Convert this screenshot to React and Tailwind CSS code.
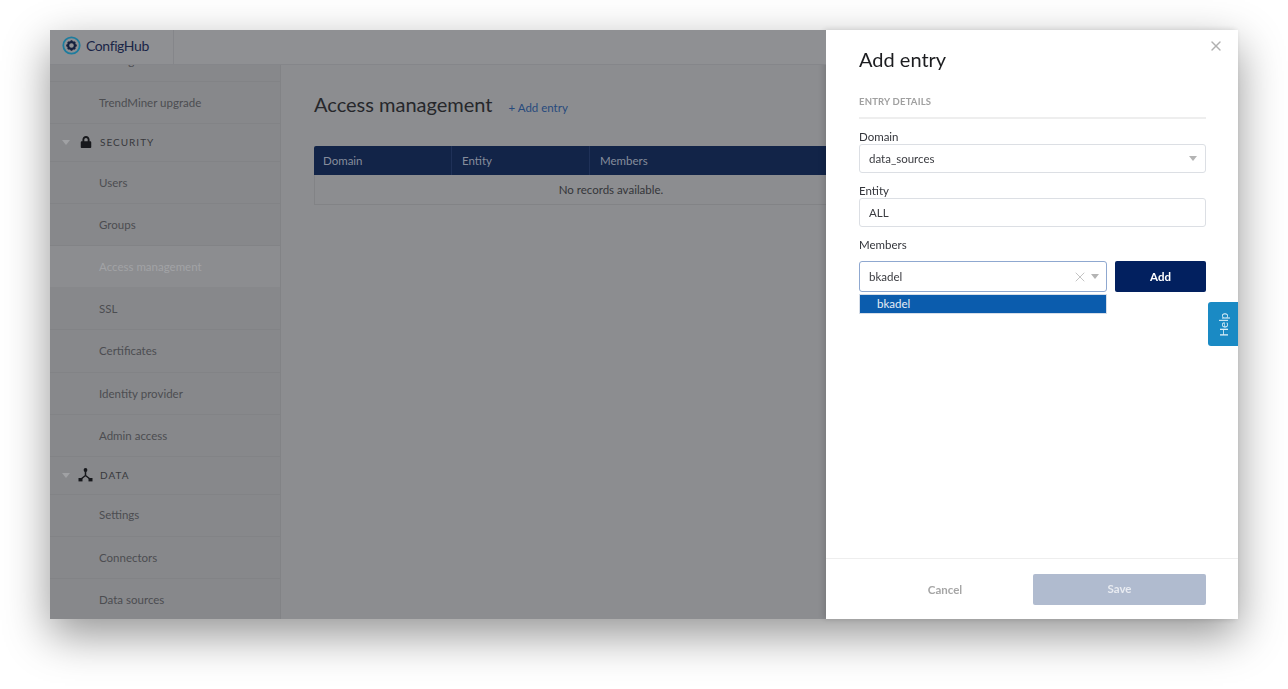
import React from 'react';
import { X } from 'lucide-react';
import { FaLock } from 'react-icons/fa';

const Caret = ({ className }) => (
  <svg width="8" height="5" viewBox="0 0 8 5" className={className}>
    <path d="M0 0h8L4 5z" fill="currentColor" />
  </svg>
);

const Logo = () => (
  <svg width="19" height="19" viewBox="0 0 19 19">
    <circle cx="9.5" cy="9.5" r="8.2" fill="none" stroke="#1d7c9e" strokeWidth="1.8" />
    <circle cx="9.5" cy="9.5" r="3.4" fill="none" stroke="#16213f" strokeWidth="2.2" />
    <g stroke="#16213f" strokeWidth="1.8">
      <path d="M9.5 4.2v2M9.5 12.8v2M4.2 9.5h2M12.8 9.5h2M5.8 5.8l1.4 1.4M11.8 11.8l1.4 1.4M13.2 5.8l-1.4 1.4M7.2 11.8l-1.4 1.4" />
    </g>
  </svg>
);

const DataIcon = () => (
  <svg width="15" height="14" viewBox="0 0 15 14" className="text-[#17181c]">
    <circle cx="7.5" cy="2" r="1.9" fill="currentColor" />
    <rect x="0.5" y="10" width="4" height="3.4" fill="currentColor" />
    <rect x="10.5" y="10" width="4" height="3.4" fill="currentColor" />
    <path d="M7.5 3v4.5M7.5 7.5L3 11M7.5 7.5L12 11" stroke="currentColor" strokeWidth="1.5" fill="none" />
  </svg>
);

const NavItem = ({ label, active }) => (
  <div
    className={`h-[42.2px] flex items-center pl-[49px] text-[11.5px] border-b ${
      active
        ? 'bg-[#8c8d90] text-[#a2a3a6] border-[#87888b] mr-[-1px]'
        : 'text-[#4c4d51] border-[#828386]'
    }`}
  >
    {label}
  </div>
);

const NavGroup = ({ label, icon }) => (
  <div className="h-[37.5px] flex items-center border-b border-[#828386]">
    <Caret className="ml-[12px] text-[#a0a1a4]" />
    <div className="w-[15px] ml-[8px] flex justify-center">{icon}</div>
    <span className="ml-[7px] text-[10px] tracking-[1px] text-[#38393d]">{label}</span>
  </div>
);

const Field = ({ label, children }) => (
  <div>
    <div className="text-[11.5px] leading-[14px] text-[#33353b]">{label}</div>
    {children}
  </div>
);

export default function App() {
  const adminItems = ['Users', 'Groups', 'Access management', 'SSL', 'Certificates', 'Identity provider', 'Admin access'];
  const dataItems = ['Settings', 'Connectors', 'Data sources'];

  return (
    <div className="w-[1288px] h-[689px] bg-white pt-[30px] pl-[50px] overflow-hidden font-['Lato','Liberation_Sans',sans-serif]">
      <div className="relative w-[1188px] h-[589px] flex blur-[0.5px] shadow-[0_16px_42px_rgba(0,0,0,0.42)]">
        {/* dimmed app behind the drawer */}
        <div className="w-[776px] h-full flex flex-col overflow-hidden bg-[#8c8d90]">
          <div className="h-[35px] shrink-0 flex bg-[#8f9093] border-b border-[#85868a] relative z-10">
            <div className="w-[124px] flex items-center pl-[12px] pb-[4px] border-r border-[#85868a]">
              <Logo />
              <span className="ml-[5px] text-[14px] tracking-[-0.4px] text-[#1a2547]">ConfigHub</span>
            </div>
          </div>
          <div className="flex flex-1 min-h-0">
            <div className="w-[231px] shrink-0 overflow-hidden bg-[#87888b] border-r border-[#828386]">
              <div className="mt-[-25.2px]">
                <NavItem label="Settings" />
                <NavItem label="TrendMiner upgrade" />
                <NavGroup label="SECURITY" icon={<FaLock size={12} className="text-[#17181c]" />} />
                {adminItems.map((item) => (
                  <NavItem key={item} label={item} active={item === 'Access management'} />
                ))}
                <NavGroup label="DATA" icon={<DataIcon />} />
                {dataItems.map((item) => (
                  <NavItem key={item} label={item} />
                ))}
              </div>
            </div>
            <div className="flex-1 pt-[27px] pl-[33px] overflow-hidden">
              <div className="flex items-baseline">
                <h1 className="text-[20px] leading-[24px] text-[#26272b]">Access management</h1>
                <span className="ml-[16px] text-[11.5px] text-[#274a7d]">+ Add entry</span>
              </div>
              <div className="w-[594px] mt-[30px]">
                <div className="h-[29px] flex items-center bg-[#122448] rounded-t-[2px] text-[11.5px] text-[#868d9c]">
                  <div className="w-[138px] h-full flex items-center pl-[9px] border-r border-[#1f3158]">Domain</div>
                  <div className="w-[138px] h-full flex items-center pl-[10px] border-r border-[#1f3158]">Entity</div>
                  <div className="flex-1 pl-[10px]">Members</div>
                </div>
                <div className="h-[30px] flex items-center justify-center border-x border-b border-[#828386] text-[11.5px] text-[#35363a]">
                  No records available.
                </div>
              </div>
            </div>
          </div>
        </div>

        {/* drawer */}
        <div className="relative w-[412px] h-full flex flex-col bg-white shadow-[-2px_0_6px_rgba(0,0,0,0.15)]">
          <X size={16} strokeWidth={2} className="absolute top-[8px] right-[14px] text-[#b0b0b0]" />
          <div className="flex-1 pt-[17px] pl-[33px] pr-[32px]">
            <h2 className="text-[20px] leading-[24px] text-[#1c1d20]">Add entry</h2>
            <div className="mt-[25px] pb-[9px] border-b-2 border-[#eeeeee] text-[9.5px] leading-[12px] font-bold tracking-[0.2px] text-[#a0a0a0]">
              ENTRY DETAILS
            </div>
            <div className="mt-[11px]">
              <Field label="Domain">
                <div className="h-[29px] flex items-center justify-between px-[9px] border border-[#dcdfe4] rounded-[3px] text-[11.5px] text-[#3a3b40]">
                  <span>data_sources</span>
                  <Caret className="text-[#b4b4b4] mr-[-1px]" />
                </div>
              </Field>
            </div>
            <div className="mt-[11px]">
              <Field label="Entity">
                <div className="h-[29px] flex items-center px-[9px] border border-[#dcdfe4] rounded-[3px] text-[11.5px] text-[#3a3b40]">
                  ALL
                </div>
              </Field>
            </div>
            <div className="mt-[11px]">
              <Field label="Members">
                <div className="mt-[9px] flex gap-[8px]">
                  <div className="relative w-[248px] h-[31px] flex items-center px-[9px] border border-[#8fa8d0] rounded-[3px] text-[11.5px] text-[#3a3b40]">
                    <span>bkadel</span>
                    <X size={16} strokeWidth={1.5} className="ml-auto text-[#c4c4c4]" />
                    <Caret className="ml-[3px] mr-[-2px] text-[#b4b4b4]" />
                    <div className="absolute left-[-1px] top-[32px] w-[248px] h-[20px] flex items-center pl-[17px] bg-[#0b5cad] border border-[#d5dde8] text-[11.5px] text-[#e6edf6]">
                      bkadel
                    </div>
                  </div>
                  <button className="w-[91px] h-[31px] rounded-[2px] bg-[#02205f] text-[11.5px] font-bold text-white">Add</button>
                </div>
              </Field>
            </div>
          </div>
          <div className="h-[61px] shrink-0 flex items-center border-t border-[#eeeeee] pr-[32px]">
            <span className="w-[207px] pl-[31px] pt-[1px] text-center text-[11.5px] font-bold text-[#a6a6a6]">Cancel</span>
            <button className="w-[173px] h-[31px] rounded-[2px] bg-[#b0bbcf] text-[11.5px] font-bold text-[#e8ebf1]">Save</button>
          </div>
          <div className="absolute top-[272px] right-0 w-[30px] h-[44px] flex items-center justify-center rounded-l-[3px] bg-[#1a8ac4]">
            <span className="-rotate-90 ml-[1px] mt-[1px] text-[11.5px] text-[#d8edf7]">Help</span>
          </div>
        </div>
      </div>
    </div>
  );
}
